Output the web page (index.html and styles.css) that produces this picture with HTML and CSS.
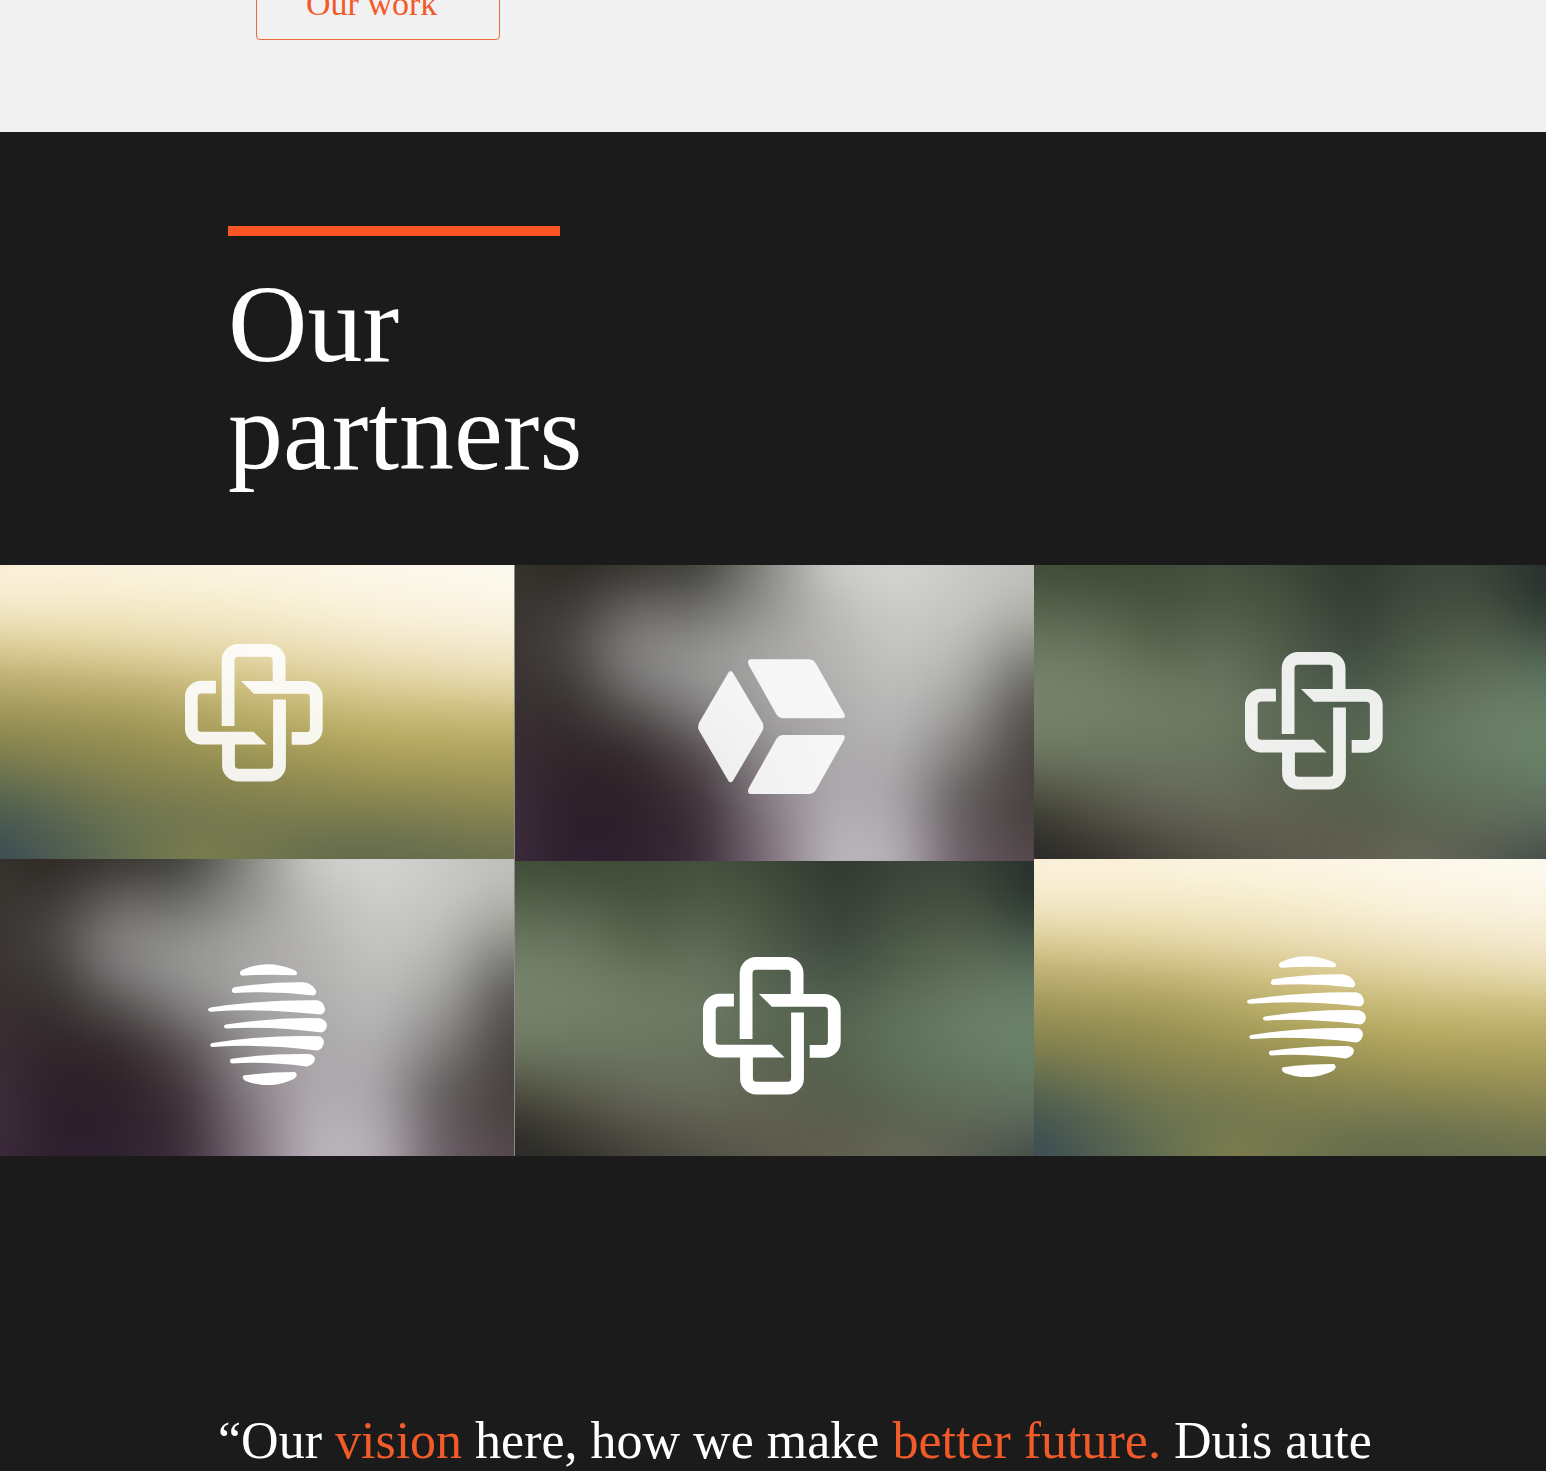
FILE: index.html
```html
<!DOCTYPE html>
<html lang="en">
<head>
  <meta charset="utf-8">
  <meta name="viewport" content="width=device-width, initial-scale=1">
  <title>Our partners</title>
  <link rel="stylesheet" href="styles.css">
</head>
<body>
  <svg class="sprite" aria-hidden="true">
    <symbol id="logo-cross" viewBox="0 0 138 138">
      <g id="cross-half">
        <path fill="none" stroke="currentColor" stroke-width="12.8" d="M43.1 82V16.4a10 10 0 0 1 10-10h31a10 10 0 0 1 10 10V43M68.500 43.4h52.800a10 10 0 0 1 10 10v31a10 10 0 0 1-10 10h-14.600"/>
        <path fill="currentColor" d="M56 37h13v12.800z"/>
      </g>
      <use href="#cross-half" transform="rotate(180 68.8 68.8)"/>
    </symbol>
    <symbol id="logo-cube" viewBox="37 42 441 405">
      <g fill="currentColor">
        <path d="M128 83Q135 73 142 83L230 232Q237 245 230 258L142 407Q135 417 128 407L41 258Q34 245 41 232Z"/>
        <path d="M196 43H368Q383 43 391 56L475 205Q482 220 470 220H293Q280 220 272 208L189 60Q183 44 196 43Z"/>
        <path d="M196 447H368Q383 447 391 434L475 285Q482 270 470 270H293Q280 270 272 282L189 430Q183 446 196 447Z"/>
      </g>
    </symbol>
    <symbol id="logo-globe" viewBox="39 32 358 364">
      <g fill="currentColor">
        <path d="M142 50Q215 16 299 50Q307 54 307 61Q306 66 300 66Q220 62 142 67Q135 66 135 60Q135 53 142 50Z"/>
        <path d="M117 102Q220 86 325 87Q352 89 364 112Q367 122 357 127Q240 112 119 119Q110 119 111 111Q112 104 117 102Z"/>
        <path d="M46 163Q200 139 368 141Q386 144 391 166Q391 181 378 184Q200 164 46 176Q39 175 39 169Q40 164 46 163Z"/>
        <path d="M93 214Q235 192 376 195Q396 201 397 217Q394 236 380 238Q230 219 93 226Q87 225 87 220Q87 215 93 214Z"/>
        <path d="M52 270Q200 245 375 249Q388 256 388 268Q385 288 368 292Q200 271 52 282Q45 281 46 275Q47 271 52 270Z"/>
        <path d="M110 317Q220 301 345 303Q361 308 361 318Q357 337 335 340Q220 325 111 331Q104 329 105 322Q106 318 110 317Z"/>
        <path d="M148 367Q220 357 300 357Q306 359 306 367Q304 374 297 378Q225 412 152 384Q143 378 144 371Q145 368 148 367Z"/>
      </g>
    </symbol>
  </svg>

  <section class="intro">
    <a class="button" href="#work">Our work</a>
  </section>

  <main class="dark">
    <header class="heading">
      <div class="rule"></div>
      <h2>Our<br>partners</h2>
    </header>

    <div class="partners">
      <div class="column column-left">
        <div class="tile gold soft"><svg class="cross" role="img" aria-label="Cross partner"><use href="#logo-cross"/></svg></div>
        <div class="tile grey low"><svg class="globe" role="img" aria-label="Globe partner"><use href="#logo-globe"/></svg></div>
      </div>
      <div class="column column-middle">
        <div class="tile grey low soft"><svg class="cube" role="img" aria-label="Cube partner"><use href="#logo-cube"/></svg></div>
        <div class="tile green low"><svg class="cross" role="img" aria-label="Cross partner"><use href="#logo-cross"/></svg></div>
      </div>
      <div class="column column-right">
        <div class="tile green soft"><svg class="cross" role="img" aria-label="Cross partner"><use href="#logo-cross"/></svg></div>
        <div class="tile gold"><svg class="globe" role="img" aria-label="Globe partner"><use href="#logo-globe"/></svg></div>
      </div>
    </div>

    <blockquote class="quote">“Our <em>vision</em> here, how we make <em>better future.</em> Duis aute</blockquote>
  </main>
</body>
</html>
```
FILE: styles.css
```css
* {
  box-sizing: border-box;
}

body {
  margin: 0;
  background: #1b1b1b;
  color: #fff;
  font-family: "Liberation Serif", "Times New Roman", serif;
}

.sprite {
  position: absolute;
  width: 0;
  height: 0;
}

.intro {
  display: flex;
  align-items: flex-end;
  height: 132px;
  padding: 0 256px 92px;
  background: #f1f1f1;
}

.button {
  flex: none;
  width: 244px;
  height: 72px;
  padding-left: 49px;
  border: 1px solid #ee6a3c;
  border-radius: 4px;
  color: #f15a29;
  font-size: 34px;
  line-height: 70px;
  text-decoration: none;
}

.heading {
  padding: 94px 228px 79px;
}

.rule {
  width: 332px;
  max-width: 100%;
  height: 10px;
  background: #fa5523;
}

h2 {
  margin: 34px 0 0;
  font-size: 110px;
  font-weight: 400;
  line-height: 108px;
}

.partners {
  display: grid;
  grid-template-columns: 514fr 520fr 512fr;
}

.column {
  display: grid;
  grid-template-rows: 294px 297px;
  min-width: 0;
}

.column-middle {
  grid-template-rows: 296px 295px;
  border-left: 1px solid #8d8b86;
}

.tile {
  position: relative;
  display: flex;
  align-items: center;
  justify-content: center;
  padding: 2px 6px 0 0;
  overflow: hidden;
}

/* Stacked colour bands, softened into an out-of-focus photo */
.tile::before {
  content: "";
  position: absolute;
  inset: -40px;
  background-repeat: no-repeat;
  filter: blur(18px);
}

.low {
  padding-top: 34px;
}

.column-left .globe {
  margin-left: 26px;
}

.column-right .tile {
  padding: 18px 0 0 32px;
}

.column-right .soft {
  padding-left: 48px;
}

.tile svg {
  position: relative;
  color: #fff;
}

.soft svg {
  opacity: .9;
}

.cross {
  width: 138px;
  height: 138px;
}

.cube {
  width: 147px;
  height: 135px;
  margin-bottom: 8px;
}

.globe {
  width: 119px;
  height: 121px;
}

.gold::before {
  background-image:
    linear-gradient(90deg, #fcf0da 40px, #fcf3e0, #fdf6e6, #fdf8ec, #fdfbf0 calc(100% - 40px)),
    linear-gradient(90deg, #f5ebcb 40px, #f5ebca, #f7eecf, #fbf3df, #fbf5e6 calc(100% - 40px)),
    linear-gradient(90deg, #dfd09a 40px, #e6d8a8, #ecdfb8, #f2e6c6, #f5ead0 calc(100% - 40px)),
    linear-gradient(90deg, #bfb173 40px, #cbbb7e, #d9c98f, #e4d6a6, #ebdfb8 calc(100% - 40px)),
    linear-gradient(90deg, #a69b5e 40px, #ada261, #c2b470, #cfc080, #d3c486 calc(100% - 40px)),
    linear-gradient(90deg, #8d884f 40px, #989152, #ada35c, #b8ac62, #bbae69 calc(100% - 40px)),
    linear-gradient(90deg, #76794f 40px, #8a8650, #968f52, #a69b58, #a79c5a calc(100% - 40px)),
    linear-gradient(90deg, #57654f 40px, #787a4f, #84824f, #8d8850, #958e54 calc(100% - 40px)),
    linear-gradient(90deg, #455650 40px, #6a7350, #76794e, #737750, #7f7e50 calc(100% - 40px)),
    linear-gradient(90deg, #3b4b54 40px, #5f6b50 26%, #7d7e4d 40%, #616a4c 64%, #6c704e calc(100% - 40px));
  background-size: 100% 60px, 100% 100px, 100% 135px, 100% 165px, 100% 195px,
    100% 225px, 100% 255px, 100% 285px, 100% 315px, 100% 100%;
}

.grey::before {
  background-image:
    linear-gradient(90deg, #38342f 28px, #2d2824, #393732, #40403a, #858580, #cbcbc8, #d5d5d3, #cacac8, #c0c0bd calc(100% - 48px)),
    linear-gradient(90deg, #38342f 28px, #3d3935, #66625f, #6b6a67, #91918e, #bbbbb8, #cdcdca, #c6c6c3, #b4b5ae calc(100% - 48px)),
    linear-gradient(90deg, #383230 28px, #494543, #858281, #8f8f8d, #a5a4a2, #b6b5b3, #c6c6c4, #bcbcb9, #8f918a calc(100% - 48px)),
    linear-gradient(90deg, #383230 28px, #3e3a39, #7b7a79, #979795, #a6a5a3, #b2b1af, #c0c0be, #aeaeab, #6b6a65 calc(100% - 48px)),
    linear-gradient(90deg, #3b3033 28px, #352d2d, #514c4c, #7b7979, #a3a1a1, #adabab, #bab9b9, #9c9b99, #54504c calc(100% - 48px)),
    linear-gradient(90deg, #3c2d35 28px, #30252a, #33282a, #554b4d, #918d8f, #aba8aa, #b0aeb0, #807d7b, #4a4541 calc(100% - 48px)),
    linear-gradient(90deg, #3e2f3b 28px, #2d2029, #2d2128, #40343a, #857d84, #b1abb1, #aaa6ab, #655f5f, #47413f calc(100% - 48px)),
    linear-gradient(90deg, #402f3e 28px, #2c1f2b, #2d202c, #3a2b34, #7d7078, #b6b0b7, #b2adb3, #645c60, #49413f calc(100% - 48px)),
    linear-gradient(90deg, #3f2e3d 28px, #2d1f2e, #2f2130, #3b2c38, #7b6d77, #bab4bb, #b8b2b9, #6b5f66, #54474d calc(100% - 48px));
}

.green::before {
  background-image:
    linear-gradient(90deg, #414c38 36px, #3f4a37, #3f4a37, #454f3e, #3d4738, #2f382e, #3d453a, #3a443a, #262f2a calc(100% - 40px)),
    linear-gradient(90deg, #55614a 36px, #515d48, #48543f, #4f5b46, #46513f, #353e35, #424c3e, #455040, #2b3630 calc(100% - 40px)),
    linear-gradient(90deg, #6a7660 36px, #68745d, #56624b, #5d6953, #4d5947, #3d473f, #4c5a47, #56614e, #46584a calc(100% - 40px)),
    linear-gradient(90deg, #76826a 36px, #727e67, #6a7760, #68745e, #566250, #465547, #55654f, #60705a, #5f7560 calc(100% - 40px)),
    linear-gradient(90deg, #79836b 36px, #75806a, #6f7c65, #6d7962, #5a6855, #526350, #5f715c, #6c7d66, #6b8169 calc(100% - 40px)),
    linear-gradient(90deg, #6c7660 36px, #6b7660, #6b7660, #69745f, #58644f, #56644f, #5f735c, #677d63, #6a8269 calc(100% - 40px)),
    linear-gradient(90deg, #4e4e40 36px, #5c5d4d, #66685a, #676b5b, #5f6453, #565f4c, #5c6b56, #61715b, #627560 calc(100% - 40px)),
    linear-gradient(90deg, #33322c 36px, #46443a, #57554a, #5f5e50, #605e50, #5b5c4d, #5c6150, #5f6756, #59655a calc(100% - 40px)),
    linear-gradient(90deg, #272725 36px, #33312c, #45433a, #525045, #5c5a4d, #605e50, #69695a, #575c50, #434c47 calc(100% - 40px));
}

.grey::before,
.green::before {
  background-size: 100% 62px, 100% 100px, 100% 137px, 100% 172px, 100% 210px,
    100% 250px, 100% 287px, 100% 318px, 100% 100%;
}

.quote {
  margin: 0;
  padding: 255px 160px 0 218px;
  font-size: 52px;
  line-height: 60px;
}

.quote em {
  color: #f15a29;
  font-style: normal;
}
```
